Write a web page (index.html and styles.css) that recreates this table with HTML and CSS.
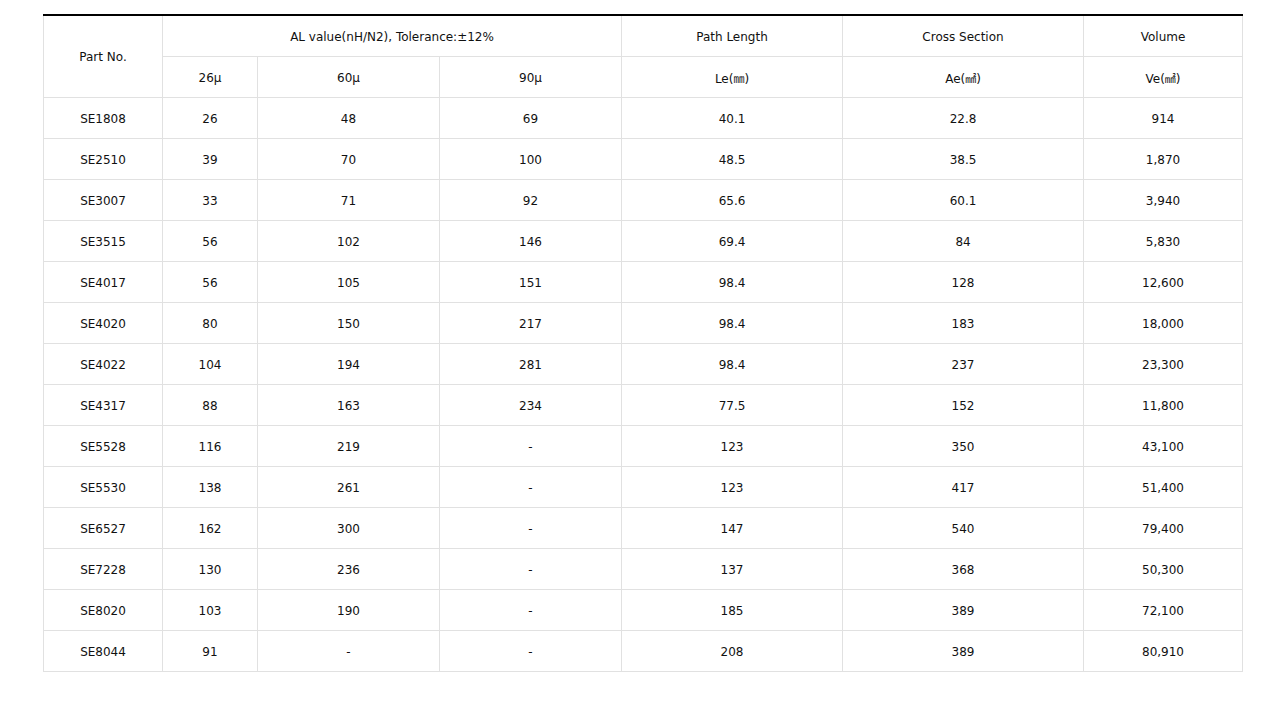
FILE: index.html
```html
<!DOCTYPE html>
<html>
<head>
<meta charset="utf-8">
<link rel="stylesheet" href="styles.css">
</head>
<body>
<div class="wrap">
<table class="spec">
<colgroup>
<col class="c1"><col class="c2"><col class="c3"><col class="c4"><col class="c5"><col class="c6"><col class="c7">
</colgroup>
<thead>
<tr>
<th rowspan="2">Part No.</th>
<th colspan="3">AL value(nH/N2), Tolerance:±12%</th>
<th>Path Length</th>
<th>Cross Section</th>
<th>Volume</th>
</tr>
<tr>
<th>26μ</th><th>60μ</th><th>90μ</th>
<th>Le(<span class="cjk">㎜</span>)</th>
<th>Ae(<span class="cjk">㎟</span>)</th>
<th>Ve(<span class="cjk">㎟</span>)</th>
</tr>
</thead>
<tbody>
<tr><td>SE1808</td><td>26</td><td>48</td><td>69</td><td>40.1</td><td>22.8</td><td>914</td></tr>
<tr><td>SE2510</td><td>39</td><td>70</td><td>100</td><td>48.5</td><td>38.5</td><td>1,870</td></tr>
<tr><td>SE3007</td><td>33</td><td>71</td><td>92</td><td>65.6</td><td>60.1</td><td>3,940</td></tr>
<tr><td>SE3515</td><td>56</td><td>102</td><td>146</td><td>69.4</td><td>84</td><td>5,830</td></tr>
<tr><td>SE4017</td><td>56</td><td>105</td><td>151</td><td>98.4</td><td>128</td><td>12,600</td></tr>
<tr><td>SE4020</td><td>80</td><td>150</td><td>217</td><td>98.4</td><td>183</td><td>18,000</td></tr>
<tr><td>SE4022</td><td>104</td><td>194</td><td>281</td><td>98.4</td><td>237</td><td>23,300</td></tr>
<tr><td>SE4317</td><td>88</td><td>163</td><td>234</td><td>77.5</td><td>152</td><td>11,800</td></tr>
<tr><td>SE5528</td><td>116</td><td>219</td><td>-</td><td>123</td><td>350</td><td>43,100</td></tr>
<tr><td>SE5530</td><td>138</td><td>261</td><td>-</td><td>123</td><td>417</td><td>51,400</td></tr>
<tr><td>SE6527</td><td>162</td><td>300</td><td>-</td><td>147</td><td>540</td><td>79,400</td></tr>
<tr><td>SE7228</td><td>130</td><td>236</td><td>-</td><td>137</td><td>368</td><td>50,300</td></tr>
<tr><td>SE8020</td><td>103</td><td>190</td><td>-</td><td>185</td><td>389</td><td>72,100</td></tr>
<tr><td>SE8044</td><td>91</td><td>-</td><td>-</td><td>208</td><td>389</td><td>80,910</td></tr>
</tbody>
</table>
</div>
</body>
</html>
```
FILE: styles.css
```css
html, body {
  margin: 0;
  padding: 0;
  background: #fff;
}
.wrap {
  padding: 14px 0 0 43px;
}
.spec {
  border-collapse: collapse;
  table-layout: fixed;
  width: 1199px;
  border-top: 2px solid #000;
  font-family: "DejaVu Sans", sans-serif;
  font-size: 12px;
  color: #111;
}
.c1 { width: 119px; }
.c2 { width: 95px; }
.c3 { width: 182px; }
.c4 { width: 182px; }
.c5 { width: 221px; }
.c6 { width: 241px; }
.c7 { width: 159px; }
.spec th, .spec td {
  border: 1px solid #e1e1e1;
  height: 39px;
  padding: 1px 0 0;
  text-align: center;
  vertical-align: middle;
  font-weight: normal;
}
.spec thead tr:first-child th {
  border-top: 2px solid #000;
}
.cjk {
  font-family: "Noto Sans CJK JP", sans-serif;
  font-size: 11px;
}
```
